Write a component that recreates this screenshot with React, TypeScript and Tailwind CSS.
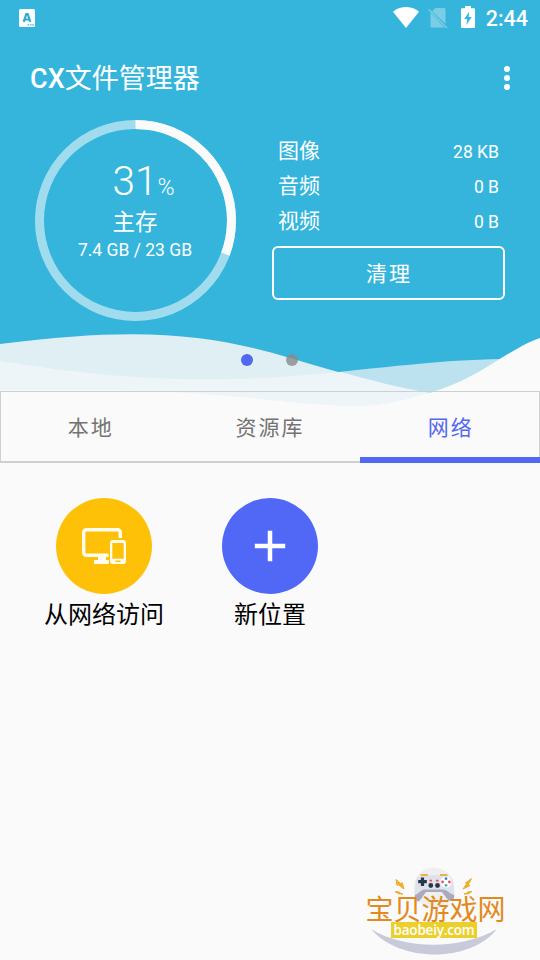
interface Usage {
  label: string;
  size: string;
}

const USAGE: Usage[] = [
  { label: "图像", size: "28 KB" },
  { label: "音频", size: "0 B" },
  { label: "视频", size: "0 B" },
];

const TABS = ["本地", "资源库", "网络"];
const ACTIVE_TAB = "网络";

function StatusBar() {
  return (
    <div className="flex h-9 items-center justify-between pl-[19px] pr-3">
      <svg width="16" height="18" viewBox="0 0 16 18" className="block">
        <rect width="16" height="18" rx="1.5" fill="#fcfeff" />
        <path d="M4.700 12.800 7.300 5h1.400L11.300 12.800M5.800 10.500h4.400" fill="none" stroke="#35a9cd" strokeWidth="2.200" />
        <path d="M8.500 15.800h1.500M11 15.800h1.500M13.300 15.800h1.500" stroke="#35b5dc" strokeWidth="1.3" />
      </svg>
      <div className="flex items-center">
        <svg width="26" height="21" viewBox="0 0 26 21" className="-mt-px">
          <path d="M0 4.7C7.2-1.6 18.8-1.6 26 4.7L13 21Z" fill="#fff" />
        </svg>
        <svg width="20" height="22" viewBox="0 0 20 22" className="ml-[9px]">
          <path d="M7.500 1H16a1.500 1.500 0 0 1 1.500 1.500V16.800L4.200 4.300ZM2.500 5.500 16.500 20.500H4a1.500 1.500 0 0 1-1.500-1.500Z" fill="#7bcde6" />
          <path d="M.8 2.5 19 21" stroke="#7bcde6" strokeWidth="1.5" />
        </svg>
        <svg width="14" height="22" viewBox="0 0 14 22" className="-mt-0.5 ml-[13px]">
          <path d="M4 0h6v2.2h3a1 1 0 0 1 1 1V21a1 1 0 0 1-1 1H1a1 1 0 0 1-1-1V3.200a1 1 0 0 1 1-1h3Z" fill="#fff" />
          <path d="M8.300 5.500 3.200 13h3L5.300 19 10.700 11H7.600Z" fill="#35b5dc" />
        </svg>
        <span className="ml-[11px] pt-0.5 text-[21.500px] font-medium leading-[34px]">2:44</span>
      </div>
    </div>
  );
}

function StorageRing() {
  return (
    <div className="relative h-[201px] w-[201px] shrink-0">
      <svg viewBox="0 0 201 201" className="absolute inset-0 h-full w-full -rotate-90">
        <circle cx="100.5" cy="100.5" r="96" fill="none" stroke="#a0dcee" strokeWidth="9" />
        <circle
          cx="100.5"
          cy="100.5"
          r="96"
          fill="none"
          stroke="#fafafa"
          strokeWidth="9"
          pathLength="100"
          strokeDasharray="30.700 100"
        />
      </svg>
      <div className="relative flex flex-col items-center pt-[39px]">
        <div className="flex h-[47px] items-baseline pl-[16px] font-light">
          <span className="text-[40.500px] leading-[45px]">31</span>
          <span className="text-[23px] leading-none">%</span>
        </div>
        <span className="h-8 pr-px text-[22.500px] leading-8">主存</span>
        <span className="pr-px text-[17.500px] leading-6">7.4 GB / 23 GB</span>
      </div>
    </div>
  );
}

function Waves() {
  return (
    <svg width="540" height="80" viewBox="0 330 540 80" className="absolute left-0 top-[330px]">
      <path d="M290 377C390 367 440 360 502 359L540 360V393H290Z" fill="#bce2ef" />
      <path d="M0 344C140 326 210 334 290 358C340 373 385 386 430 393L360 410L0 392Z" fill="#dfeff4" />
      <path d="M0 361C130 382 220 384 341 372C370 380 400 388 430 393C410 398 392 405 360 406C300 406 220 390 100 390H0Z" fill="#eef5f8" />
      <path d="M430 393C472 380 490 364 515 350Q528 342 540 338V410H0V390H100C220 390 300 406 360 406C392 405 410 398 430 393Z" fill="#fafafa" />
    </svg>
  );
}

function Tabs() {
  return (
    <nav className="relative grid h-[72px] grid-cols-3 border border-b-2 border-[#cecfcf]">
      {TABS.map((tab) => (
        <div
          key={tab}
          className={`flex items-center justify-center pt-1 text-[21px] tracking-[2px] ${
            tab === ACTIVE_TAB ? "relative pl-[3px] text-[#5468ef]" : "text-[#737373]"
          }`}
        >
          {tab}
          {tab === ACTIVE_TAB && <span className="absolute -bottom-0.5 left-0 -right-px h-1.5 bg-[#5068f2]" />}
        </div>
      ))}
    </nav>
  );
}

function Locations() {
  return (
    <main className="flex pl-[21px] pt-[35px] text-2xl text-black">
      <div className="flex w-[166px] flex-col items-center">
        <div className="flex h-24 w-24 items-center justify-center rounded-full bg-[#ffc107]">
          <svg width="46" height="38" viewBox="0 0 46 38" fill="none" stroke="#fffdf0">
            <path d="M39.300 11V5.500a2.800 2.800 0 0 0-2.800-2.800H5.500a2.800 2.800 0 0 0-2.800 2.800v20a2.800 2.800 0 0 0 2.800 2.800h22" strokeWidth="3.400" />
            <path d="M17 29h8v4h2.800v4H13v-4h4Z" fill="#fffdf0" stroke="none" />
            <path
              d="M32 13h10a3 3 0 0 1 3 3v18a3 3 0 0 1-3 3H32a3 3 0 0 1-3-3V16a3 3 0 0 1 3-3ZM31.300 16v15.800h11.400V16ZM34.500 33.600v1.300h5v-1.300Z"
              fill="#fffdf0"
              fillRule="evenodd"
              stroke="none"
            />
          </svg>
        </div>
        <span className="pt-px leading-10">从网络访问</span>
      </div>
      <div className="flex w-[166px] flex-col items-center">
        <div className="flex h-24 w-24 items-center justify-center rounded-full bg-[#5068f5]">
          <svg width="32" height="32" viewBox="0 0 32 32">
            <path d="M16 .8v30.400M.8 16h30.400" stroke="#fff" strokeWidth="4.500" />
          </svg>
        </div>
        <span className="pt-px leading-10">新位置</span>
      </div>
    </main>
  );
}

function SiteLogo() {
  return (
    <div className="absolute bottom-0 right-[30px] h-[96px] w-[150px]">
      <svg width="150" height="96" viewBox="360 864 150 96" className="absolute inset-0">
        <circle cx="434" cy="888" r="20.500" fill="#efeff0" />
        <path d="M371 929C405 950 461 950 497 929C470 963 400 963 371 929Z" fill="#c8cad9" />
        <path d="M420 876.500C426 874.800 442 874.800 448 876.500C452.500 877.500 453.500 881 453.500 886L454.500 896C455 901 449.500 902.500 447 897L443 891.500H425L420.500 898C417.500 903 413.500 901 414.500 896L415.500 885C415.500 880 416.500 877.500 420 876.500Z" fill="#e0e1e9" />
        <path d="M415 895C420 893 421 889 426 889.500H442C447 889 448 893 454 895C455 901.500 449.500 903 446.500 898L442 892H426L421 899C418 903.500 414 901 415 895Z" fill="#aaa9bd" />
        <path d="M420.500 875H428M440 875H447.500" stroke="#e7b64b" strokeWidth="2" />
        <path d="M422.500 877.500v8.500M418.200 881.700h8.600" stroke="#27384d" strokeWidth="3.200" />
        <circle cx="430.800" cy="885.500" r="2.400" fill="#27384d" />
        <circle cx="437.500" cy="885.500" r="2.400" fill="#27384d" />
        <circle cx="446" cy="882" r="5.500" fill="#fff" />
        <circle cx="446" cy="878.700" r="1.400" fill="#3f84c5" />
        <circle cx="449.400" cy="882" r="1.400" fill="#e5536c" />
        <circle cx="446" cy="885.300" r="1.400" fill="#48b6a7" />
        <circle cx="442.600" cy="882" r="1.400" fill="#e5536c" />
        <path d="M429.500 880.700h2.500M436 880.700h2.500" stroke="#df536a" strokeWidth="1.800" />
        <path
          d="M396 879.500 400.500 883.500 402.300 882.800 404 889 398.500 884.800 397 885.400ZM471.500 878.500 465.500 883 467 883.500 463 889 470 885.500 468.300 884.500ZM395 891.500 399 892 401 893.500 403 894 398.500 893.800ZM472 891.500 468 892 466 893.500 464 894 468.500 893.800Z"
          fill="#f2b329"
          stroke="#eeaa27"
        />
      </svg>
      <div className="relative flex flex-col items-center pt-[29px]">
        <span className="h-[29px] whitespace-nowrap pt-[2px] pl-px font-['Noto_Sans_CJK_SC',sans-serif] text-[28px] leading-[26px] text-[#e28a20]">
          宝贝游戏网
        </span>
        <span className="-ml-0.5 flex h-4 w-[86px] items-center justify-center bg-[#ebcf2b] font-['Open_Sans',sans-serif] text-[13.500px] font-semibold leading-4 tracking-[-0.2px] text-white">
          baobeiy.com
        </span>
      </div>
    </div>
  );
}

export default function App() {
  return (
    <div className="relative flex h-[960px] w-[540px] flex-col overflow-hidden bg-[#fafafa] font-['Roboto','Noto_Sans_CJK_SC',sans-serif] text-white">
      <header className="h-[391px] shrink-0 bg-[#35b5dc]">
        <StatusBar />
        <div className="flex h-[84px] items-center justify-between pl-[30px] pr-[30px]">
          <h1 className="pt-px text-[27px] font-normal leading-10">
            <span className="font-medium">CX</span>文件管理器
          </h1>
          <div className="flex flex-col gap-[3px]">
            <i className="h-1.5 w-1.5 rounded-full bg-white" />
            <i className="h-1.5 w-1.5 rounded-full bg-white" />
            <i className="h-1.5 w-1.5 rounded-full bg-white" />
          </div>
        </div>
        <div className="flex pl-[35px] pr-[35px]">
          <StorageRing />
          <div className="ml-9 flex-1 pt-[14px]">
            {USAGE.map((u) => (
              <div key={u.label} className="flex h-[35px] items-center justify-between pl-1.5 pr-1.5">
                <span className="text-[21px] leading-[35px]">{u.label}</span>
                <span className="pt-0.5 text-[17.500px] leading-[35px]">{u.size}</span>
              </div>
            ))}
            <button className="mt-[7px] flex h-[54px] w-full items-center justify-center rounded-md border-2 border-white pl-px pt-[3px] text-[21px] tracking-[2px]">
              清理
            </button>
          </div>
        </div>
      </header>
      <Waves />
      <div className="absolute left-[241px] top-[354px] flex gap-[33px]">
        <i className="h-3 w-3 rounded-full bg-[#5068f2]" />
        <i className="h-3 w-3 rounded-full bg-[#898989]/80" />
      </div>
      <Tabs />
      <Locations />
      <SiteLogo />
    </div>
  );
}
